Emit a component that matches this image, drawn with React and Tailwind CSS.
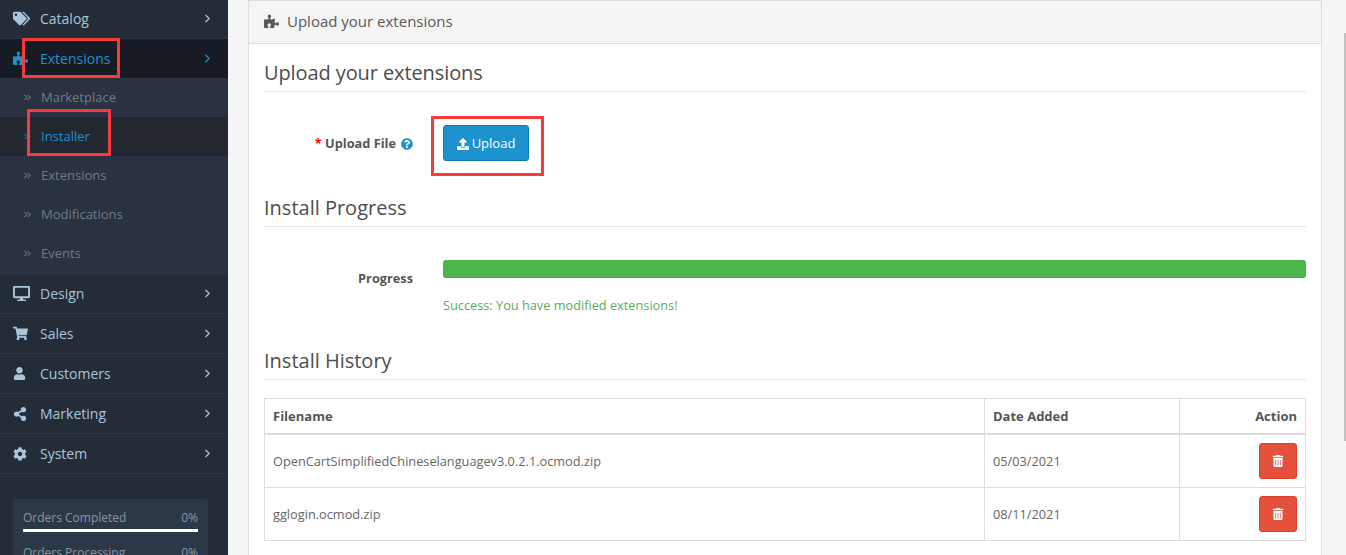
import { FaTags, FaPuzzlePiece, FaDesktop, FaShoppingCart, FaUser, FaShareAlt, FaCog, FaUpload, FaTrashAlt, FaQuestionCircle } from 'react-icons/fa'
import { ChevronRight, ChevronsRight } from 'lucide-react'

const subItems = [
  { label: 'Marketplace' },
  { label: 'Installer', active: true },
  { label: 'Extensions' },
  { label: 'Modifications' },
  { label: 'Events' },
]

const lowerItems = [
  { label: 'Design', icon: FaDesktop, size: 17 },
  { label: 'Sales', icon: FaShoppingCart, size: 15 },
  { label: 'Customers', icon: FaUser, size: 13 },
  { label: 'Marketing', icon: FaShareAlt, size: 14 },
  { label: 'System', icon: FaCog, size: 14 },
]

function MenuRow({ label, icon: Icon, size, active }) {
  return (
    <div className={[
      'flex shrink-0 items-center pl-[13px] pr-[14px]',
      active ? 'h-[39px] bg-[#171b24] text-[#1e91cf]' : 'h-10 border-b border-[#2b3642] text-[#a9c6dc]',
    ].join(' ')}>
      <span className="flex w-[27px] shrink-0"><Icon size={size} /></span>
      <span className="flex-1 text-sm">{label}</span>
      <ChevronRight size={13} strokeWidth={2.25} />
    </div>
  )
}

function Legend({ children }) {
  return (
    <div className="flex h-[31px] shrink-0 items-start border-b border-[#e5e5e5] text-[20px] leading-[23px] text-[#4d4d4d]">
      {children}
    </div>
  )
}

function HistoryRow({ file, date, last }) {
  return (
    <div className={[
      'flex text-[12.75px] text-[#666]',
      last ? 'h-[53px] border-t border-[#ddd]' : 'h-[52px]',
    ].join(' ')}>
      <div className="flex w-[719px] items-center pl-2 pt-0.5">{file}</div>
      <div className="flex w-[195px] items-center border-l border-[#ddd] pl-2 pt-0.5">{date}</div>
      <div className="flex flex-1 items-center justify-end border-l border-[#ddd] pr-2">
        <button type="button" className="flex h-9 w-[38px] items-center justify-center rounded-[3px] border border-[#d9402c] bg-[#e4503c] text-white">
          <FaTrashAlt size={12} />
        </button>
      </div>
    </div>
  )
}

export default function App() {
  return (
    <div className="relative flex h-[555px] w-[1346px] overflow-hidden bg-[#f5f5f5] font-['Open_Sans',sans-serif]">
      <aside className="flex w-[228px] shrink-0 flex-col bg-[#242c37]">
        <div className="-mt-px">
          <MenuRow label="Catalog" icon={FaTags} size={17} />
        </div>
        <MenuRow label="Extensions" icon={FaPuzzlePiece} size={15} active />
        <div className="flex flex-col bg-[#2a3140]">
          {subItems.map(({ label, active }) => (
            <div key={label} className={[
              'flex h-[39px] items-center pl-[22px] text-[13px]',
              active ? 'bg-[#23272f] text-[#1e91cf]' : 'text-[#6f7c8c]',
            ].join(' ')}>
              <span className={['flex w-[19px] shrink-0', active ? '' : 'text-[#8d9aa8]'].join(' ')}>
                <ChevronsRight size={11} strokeWidth={2} />
              </span>
              {label}
            </div>
          ))}
        </div>
        <div className="h-px shrink-0 bg-[#2b3642]" />
        {lowerItems.map((item) => <MenuRow key={item.label} {...item} />)}
        <div className="mx-[13px] mt-[25px] flex h-[80px] w-[195px] shrink-0 flex-col rounded-[3px] bg-[#2d3846] px-2.5 pt-[11px] text-xs text-[#8a96a3]">
          <div className="flex justify-between"><span>Orders Completed</span><span>0%</span></div>
          <div className="mt-[3px] h-[3px] bg-white" />
          <div className="mt-[13px] flex justify-between"><span>Orders Processing</span><span>0%</span></div>
        </div>
      </aside>

      <main className="ml-5 flex h-[555px] w-[1074px] shrink-0 flex-col border-x border-t border-[#ddd] bg-white">
        <div className="flex h-[43px] shrink-0 items-center gap-2 border-b border-[#ddd] bg-[#f5f5f5] pb-0.5 pl-[15px] text-[#595959]">
          <FaPuzzlePiece size={15} />
          <span className="text-[15px]">Upload your extensions</span>
        </div>
        <div className="flex flex-col px-[15px] pt-[17px]">
          <Legend><span className="tracking-[-0.1px]">Upload your extensions</span></Legend>
          <div className="flex h-[104px] shrink-0 items-center pb-[3px]">
            <div className="flex w-[149px] items-center justify-end gap-[5px] pt-0.5 text-[12.75px] font-bold text-[#555]">
              <span><span className="text-[#f00]">*</span> Upload File</span>
              <FaQuestionCircle size={12} className="text-[#1e91cf]" />
            </div>
            <button type="button" className="ml-[30px] flex h-[36px] w-[86px] items-center justify-center gap-[3px] rounded-[3px] border border-[#1978ab] bg-[#1e91cf] pt-0.5 text-[13px] text-white">
              <FaUpload size={12} />
              Upload
            </button>
          </div>
          <Legend>Install Progress</Legend>
          <div className="flex h-[102px] shrink-0 pt-[33px]">
            <div className="flex h-[36px] w-[149px] items-center justify-end pt-0.5 text-[12.75px] font-bold text-[#555]">Progress</div>
            <div className="ml-[30px] flex-1">
              <div className="h-[18px] rounded-[3px] border-b border-[#45a245] bg-[#4cb64c]" />
              <p className="mt-[18px] text-[12.75px] text-[#60ac60]">Success: You have modified extensions!</p>
            </div>
          </div>
          <div className="pt-[20px]">
            <Legend>Install History</Legend>
          </div>
          <div className="mt-[18px] border border-[#ddd]">
            <div className="flex h-9 border-b-2 border-[#ddd] text-[13px] font-bold text-[#555]">
              <div className="flex w-[719px] items-center pl-2 pt-0.5">Filename</div>
              <div className="flex w-[195px] items-center border-l border-[#ddd] pl-2 pt-0.5">Date Added</div>
              <div className="flex flex-1 items-center justify-end border-l border-[#ddd] pr-2 pt-0.5">Action</div>
            </div>
            <HistoryRow file="OpenCartSimplifiedChineselanguagev3.0.2.1.ocmod.zip" date="05/03/2021" />
            <HistoryRow file="gglogin.ocmod.zip" date="08/11/2021" last />
          </div>
        </div>
      </main>

      {/* scrollbar thumb */}
      <div className="absolute right-0 top-[33px] h-[408px] w-[2px] bg-[#c1c1c1]" />

      {/* red annotation boxes */}
      <div className="absolute left-[22px] top-[38px] h-[40px] w-[98px] border-[3px] border-[#f73a3a]" />
      <div className="absolute left-[27px] top-[109px] h-[47px] w-[84px] border-[3px] border-[#f73a3a]" />
      <div className="absolute left-[431px] top-[116px] h-[60px] w-[113px] border-[3px] border-[#f73a3a]" />
    </div>
  )
}
